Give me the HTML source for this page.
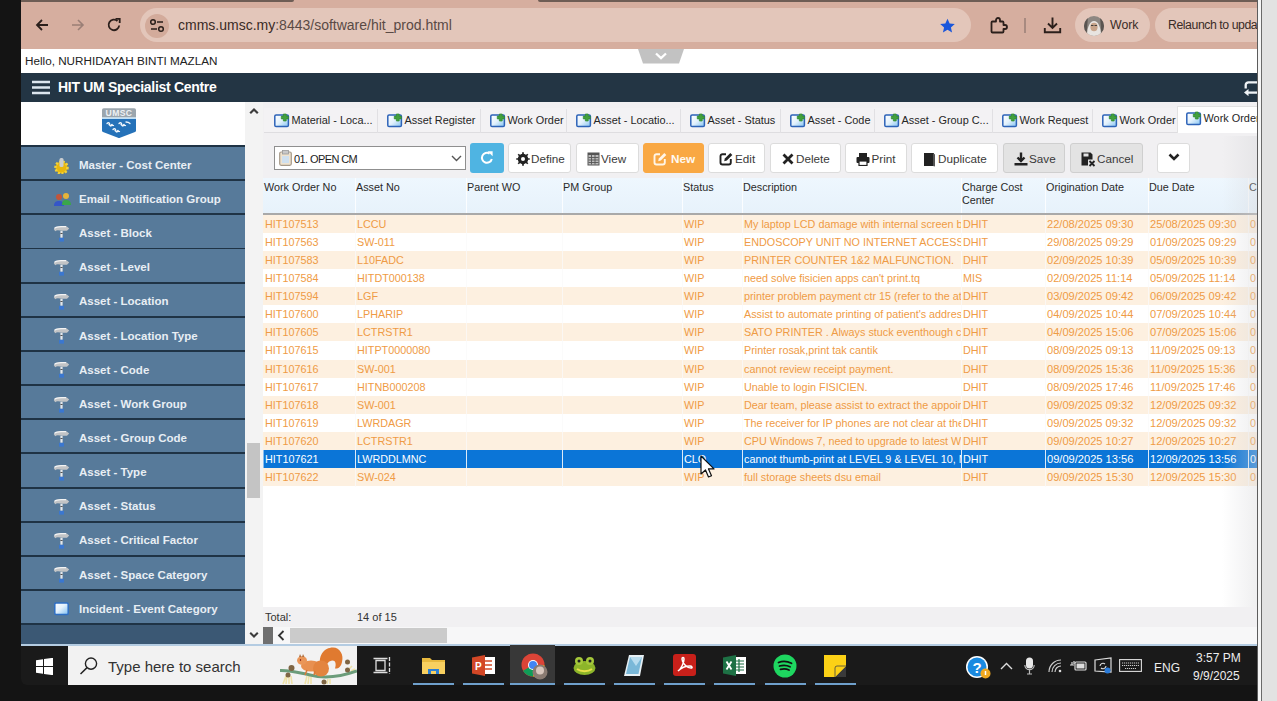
<!DOCTYPE html>
<html><head><meta charset="utf-8"><style>
*{box-sizing:border-box;margin:0;padding:0}
html,body{width:1277px;height:701px;overflow:hidden;background:#141414;font-family:"Liberation Sans",sans-serif}
.a{position:absolute}
#browser{left:21px;top:0;width:1236px;height:49px;background:#d6ae9f}
#ts1{left:21px;top:0;width:273px;height:2px;background:#6e5d55;border-bottom-right-radius:4px}
#ts2{left:538px;top:0;width:719px;height:2px;background:#6e5d55;border-bottom-left-radius:4px}
#pill{left:140px;top:8px;width:831px;height:34px;border-radius:17px;background:#e3c6ba}
#siteic{left:145px;top:13.5px;width:24px;height:24px;border-radius:12px;background:#d3ab9b}
#url{left:178px;top:17px;font-size:14px;color:#3a2a25;white-space:nowrap;letter-spacing:0}
#url span{color:#5a4a45}
#hello{left:21px;top:49px;width:1236px;height:24px;background:#fff}
#hellotxt{left:25px;top:54px;font-size:11.7px;color:#222;white-space:nowrap}
#navy{left:21px;top:73px;width:1236px;height:29px;background:#233544}
#title{left:58px;top:79px;font-size:14px;letter-spacing:-0.3px;font-weight:bold;color:#fff;white-space:nowrap}
#rightstrip{left:1257px;top:0;width:20px;height:701px;background:linear-gradient(to right,#5c5c5c 0,#5c5c5c 1.3px,#f6f6f6 1.3px,#f6f6f6 4px,#6a6a6a 4px,#6a6a6a 5.3px,#e2e2e2 5.3px)}
#rs2{display:none}
#sidebar{left:21px;top:102px;width:224px;height:542px;background:#1f3345;overflow:hidden}
#logoarea{left:0;top:0;width:224px;height:43px;background:#fff}
.item{position:absolute;left:0;width:224px;height:32.3px;background:#577a9a;color:#e8eef4;font-weight:bold;font-size:11.5px;white-space:nowrap}
.item .t{position:absolute;left:58px;top:11.8px}
.item .ic{position:absolute;left:32px;top:9.5px;width:16px;height:16px}
#sbscroll{left:245px;top:102px;width:18px;height:542px;background:#f3f3f3}
#sbthumb{left:247px;top:443px;width:13px;height:55px;background:#c4c4c4}
#content{left:263px;top:102px;width:994px;height:542px;background:#f1f0f2;overflow:hidden}
#taskbar{left:21px;top:645px;width:1236px;height:40px;background:#1a1a1a;border-bottom-left-radius:6px}

.tab{font-size:10.9px;color:#262626;white-space:nowrap;height:16px;line-height:16px}
.tab svg{position:absolute;left:0;top:0}
.tab .tt{position:absolute;left:18.5px;top:0}
.hd{font-size:10.8px;color:#2a2a2a;line-height:13px;white-space:nowrap}
.rw{overflow:hidden}
.cell{position:absolute;top:0;height:100%;line-height:18px;font-size:10.8px;color:#ef9b45;white-space:nowrap;overflow:hidden;padding-left:2px}
.sel .cell{color:#fff;box-shadow:inset 1px 0 0 #86bdf0}
.dt{font-size:11.1px}
.tot{font-size:11px;color:#333;white-space:nowrap}
.btn{position:absolute;top:143px;height:30px;border:1px solid #dcdcdc;border-radius:3px;background:#fff;font-size:11.7px;color:#333;white-space:nowrap;line-height:27px}
.btn svg{position:absolute;top:7.5px}
.btn .bt{position:absolute;top:0.5px;color:#3a3a3a}
</style></head><body>
<div id="browser" class="a"></div><div id="ts1" class="a"></div><div id="ts2" class="a"></div>
<div id="pill" class="a"></div><div id="siteic" class="a"></div>

<svg class="a" style="left:34px;top:17px" width="16" height="16" viewBox="0 0 16 16"><path d="M14 8H3M8 3L3 8l5 5" stroke="#2b1f1b" stroke-width="1.8" fill="none"/></svg>
<svg class="a" style="left:70px;top:17px" width="16" height="16" viewBox="0 0 16 16"><path d="M2 8h11M8 3l5 5-5 5" stroke="#9a7f76" stroke-width="1.6" fill="none"/></svg>
<svg class="a" style="left:106px;top:17px" width="16" height="16" viewBox="0 0 16 16"><path d="M13.2 8.5A5.3 5.3 0 1 1 11.5 4" stroke="#2b1f1b" stroke-width="1.8" fill="none"/><path d="M9.5 1.8h4.2V6" stroke="#2b1f1b" stroke-width="1.8" fill="none"/></svg>
<svg class="a" style="left:149px;top:18px" width="16" height="15" viewBox="0 0 16 15"><circle cx="4" cy="4" r="2.3" stroke="#2b1f1b" stroke-width="1.5" fill="none"/><path d="M8 4h6M2 11h6" stroke="#2b1f1b" stroke-width="1.6"/><circle cx="12" cy="11" r="2.3" stroke="#2b1f1b" stroke-width="1.5" fill="none"/></svg>
<svg class="a" style="left:939px;top:18px" width="17" height="16" viewBox="0 0 24 23"><path d="M12 1l3.1 7 7.4.6-5.6 4.9 1.7 7.3L12 16.9 5.4 20.8l1.7-7.3L1.5 8.6 8.9 8z" fill="#1a56db"/></svg>
<svg class="a" style="left:989px;top:16px" width="19" height="19" viewBox="0 0 19 19"><path d="M3.5 5.5H7V4a2 2 0 0 1 4 0v1.5h2.5a1 1 0 0 1 1 1V9H16a2 2 0 0 1 0 4h-1.5v2.5a1 1 0 0 1-1 1h-10a1 1 0 0 1-1-1v-9a1 1 0 0 1 1-1z" stroke="#2b1f1b" stroke-width="1.8" fill="none" stroke-linejoin="round"/></svg>
<div class="a" style="left:1024px;top:18px;width:1.5px;height:15px;background:#a88a80"></div>
<svg class="a" style="left:1043px;top:16px" width="19" height="19" viewBox="0 0 19 19"><path d="M9.5 1.5v10M5 7.5l4.5 4.5 4.5-4.5" stroke="#2b1f1b" stroke-width="1.9" fill="none"/><path d="M1.8 12v4.2h15.4V12" stroke="#2b1f1b" stroke-width="1.9" fill="none"/></svg>
<div class="a" style="left:1075px;top:8px;width:75px;height:34px;border-radius:17px;background:#e3c6ba"></div>
<svg class="a" style="left:1084px;top:15.5px" width="20" height="20" viewBox="0 0 20 20"><defs><clipPath id="av"><circle cx="10" cy="10" r="10"/></clipPath></defs><g clip-path="url(#av)"><rect width="20" height="20" fill="#8d8782"/><path d="M3 20c0-9 3-15 7-15s7 6 7 15z" fill="#e8e4e0"/><ellipse cx="10" cy="11" rx="3.6" ry="4.2" fill="#c8a48a"/><path d="M7 9.5h2.5M10.5 9.5H13" stroke="#333" stroke-width="0.9"/><path d="M0 0h4l-1.5 20H0zM16 0h4v20h-2.5z" fill="#5a5450"/></g></svg>
<div class="a" style="left:1110px;top:17.5px;font-size:12.3px;color:#3a2c27;white-space:nowrap">Work</div>
<div class="a" style="left:1155px;top:8px;width:120px;height:34px;border-radius:17px;background:#e3c6ba"></div>
<div class="a" style="left:1168px;top:17.5px;font-size:12.3px;letter-spacing:-0.45px;color:#3a2c27;white-space:nowrap">Relaunch to update</div>

<div id="url" class="a">cmms.umsc.my<span>:8443/software/hit_prod.html</span></div>
<div id="hello" class="a"></div><div id="hellotxt" class="a">Hello, NURHIDAYAH BINTI MAZLAN</div>
<svg class="a" style="left:637.5px;top:49px" width="46" height="15" viewBox="0 0 46 15"><path d="M0 0h46l-5 14.6H5z" fill="#c2c2c2"/><path d="M18 4.5l5 4.6 5-4.6" stroke="#fff" stroke-width="2.3" fill="none"/></svg>
<div id="navy" class="a"></div><svg class="a" style="left:32px;top:80px" width="18" height="15" viewBox="0 0 18 15"><path d="M0 2h18M0 7.5h18M0 13h18" stroke="#dce6ef" stroke-width="2.4"/></svg><div id="title" class="a">HIT UM Specialist Centre</div><svg class="a" style="left:1243px;top:80px" width="14" height="16" viewBox="0 0 14 16"><path d="M14 2.3H5.5A2.8 2.8 0 0 0 2.7 5.1V8.5" stroke="#f0f3f6" stroke-width="2.3" fill="none"/><path d="M14 12.6H5" stroke="#f0f3f6" stroke-width="2.3"/><path d="M1 12.6L5.5 9v7.2z" fill="#f0f3f6"/></svg>
<div id="sidebar" class="a"><div id="logoarea" class="a"><svg class="a" style="left:81px;top:6px" width="34" height="31" viewBox="0 0 34 31"><path d="M0 2a1.8 1.8 0 0 1 1.8-1.8h30.4A1.8 1.8 0 0 1 34 2v7.6H0z" fill="#9ba6ae"/><text x="17" y="8.3" font-size="8.6" font-family="Liberation Sans" font-weight="bold" fill="#eef1f4" text-anchor="middle" letter-spacing="0.4">UMSC</text><rect x="0" y="9.6" width="34" height="1.4" fill="#bfe0f7"/><path d="M0 11h34v11.5q0 1-1 1.5L18 29.8q-1 .5-2 0L1 24q-1-.5-1-1.5z" fill="#2572b9"/><path d="M5 15.5c1.5-1.5 3-.5 2.5.8-.5 1.3 1 1.5 2.5.2M7 16.5l1.5 1.5c1-.5 2-1 3-.5M17 15.5c1.5-1.5 3-.5 2.5.8-.5 1.3 1 1.5 2.5.2M19 16.5l1.5 1.5c1-.5 2-1 3-.5M11 21.5c1.5-1.5 3-.5 2.5.8-.5 1.3 1 1.5 2.5.2M13 22.5l1.5 1.5c1-.5 2-1 3-.5M24 14c2 0 3 .5 4 1.5" stroke="#f2f7fc" stroke-width="1.3" fill="none" stroke-linecap="round"/></svg></div>
<div class="item" style="top:45.00px"><div class="ic"><svg width="17" height="17" viewBox="0 0 17 17"><circle cx="8.5" cy="10.5" r="6" fill="#e8b70e"/><circle cx="8.5" cy="10.5" r="6" fill="none" stroke="#f3d23a" stroke-width="2.5" stroke-dasharray="2 1.6"/><rect x="6.5" y="1" width="4" height="9" rx="1.5" fill="#c9cdd0"/></svg></div><div class="t">Master - Cost Center</div></div>
<div class="item" style="top:79.15px"><div class="ic"><svg width="19" height="16" viewBox="0 0 19 16"><circle cx="6" cy="6" r="3" fill="#c2553a"/><path d="M1 15c0-4 2-5 5-5s5 1 5 5z" fill="#3556c8"/><circle cx="13" cy="5" r="3" fill="#e6b43a"/><path d="M9 14c0-4 1.5-5 4-5s5 1 5 5z" fill="#3aa64a"/></svg></div><div class="t">Email - Notification Group</div></div>
<div class="item" style="top:113.30px"><div class="ic"><svg width="17" height="17" viewBox="0 0 17 17"><path d="M0.8 4.2C1.5 2 4.5 1.2 8 1.2H13.5L16.2 3.6 14 5.8H9.5C7 5.8 4 4.6 2.2 6.2z" fill="#c2c4c6"/><path d="M1.5 3.4C3 1.8 5.5 1.6 8 1.6H13" stroke="#f4f4f4" stroke-width="1.1" fill="none"/><rect x="7.4" y="5.8" width="2.2" height="7" fill="#e6e8ea"/><rect x="7.4" y="8" width="2.2" height="1" fill="#555"/><rect x="6" y="12.8" width="5" height="3.8" fill="#3b77cf"/></svg></div><div class="t">Asset - Block</div></div>
<div class="item" style="top:147.45px"><div class="ic"><svg width="17" height="17" viewBox="0 0 17 17"><path d="M0.8 4.2C1.5 2 4.5 1.2 8 1.2H13.5L16.2 3.6 14 5.8H9.5C7 5.8 4 4.6 2.2 6.2z" fill="#c2c4c6"/><path d="M1.5 3.4C3 1.8 5.5 1.6 8 1.6H13" stroke="#f4f4f4" stroke-width="1.1" fill="none"/><rect x="7.4" y="5.8" width="2.2" height="7" fill="#e6e8ea"/><rect x="7.4" y="8" width="2.2" height="1" fill="#555"/><rect x="6" y="12.8" width="5" height="3.8" fill="#3b77cf"/></svg></div><div class="t">Asset - Level</div></div>
<div class="item" style="top:181.60px"><div class="ic"><svg width="17" height="17" viewBox="0 0 17 17"><path d="M0.8 4.2C1.5 2 4.5 1.2 8 1.2H13.5L16.2 3.6 14 5.8H9.5C7 5.8 4 4.6 2.2 6.2z" fill="#c2c4c6"/><path d="M1.5 3.4C3 1.8 5.5 1.6 8 1.6H13" stroke="#f4f4f4" stroke-width="1.1" fill="none"/><rect x="7.4" y="5.8" width="2.2" height="7" fill="#e6e8ea"/><rect x="7.4" y="8" width="2.2" height="1" fill="#555"/><rect x="6" y="12.8" width="5" height="3.8" fill="#3b77cf"/></svg></div><div class="t">Asset - Location</div></div>
<div class="item" style="top:215.75px"><div class="ic"><svg width="17" height="17" viewBox="0 0 17 17"><path d="M0.8 4.2C1.5 2 4.5 1.2 8 1.2H13.5L16.2 3.6 14 5.8H9.5C7 5.8 4 4.6 2.2 6.2z" fill="#c2c4c6"/><path d="M1.5 3.4C3 1.8 5.5 1.6 8 1.6H13" stroke="#f4f4f4" stroke-width="1.1" fill="none"/><rect x="7.4" y="5.8" width="2.2" height="7" fill="#e6e8ea"/><rect x="7.4" y="8" width="2.2" height="1" fill="#555"/><rect x="6" y="12.8" width="5" height="3.8" fill="#3b77cf"/></svg></div><div class="t">Asset - Location Type</div></div>
<div class="item" style="top:249.90px"><div class="ic"><svg width="17" height="17" viewBox="0 0 17 17"><path d="M0.8 4.2C1.5 2 4.5 1.2 8 1.2H13.5L16.2 3.6 14 5.8H9.5C7 5.8 4 4.6 2.2 6.2z" fill="#c2c4c6"/><path d="M1.5 3.4C3 1.8 5.5 1.6 8 1.6H13" stroke="#f4f4f4" stroke-width="1.1" fill="none"/><rect x="7.4" y="5.8" width="2.2" height="7" fill="#e6e8ea"/><rect x="7.4" y="8" width="2.2" height="1" fill="#555"/><rect x="6" y="12.8" width="5" height="3.8" fill="#3b77cf"/></svg></div><div class="t">Asset - Code</div></div>
<div class="item" style="top:284.05px"><div class="ic"><svg width="17" height="17" viewBox="0 0 17 17"><path d="M0.8 4.2C1.5 2 4.5 1.2 8 1.2H13.5L16.2 3.6 14 5.8H9.5C7 5.8 4 4.6 2.2 6.2z" fill="#c2c4c6"/><path d="M1.5 3.4C3 1.8 5.5 1.6 8 1.6H13" stroke="#f4f4f4" stroke-width="1.1" fill="none"/><rect x="7.4" y="5.8" width="2.2" height="7" fill="#e6e8ea"/><rect x="7.4" y="8" width="2.2" height="1" fill="#555"/><rect x="6" y="12.8" width="5" height="3.8" fill="#3b77cf"/></svg></div><div class="t">Asset - Work Group</div></div>
<div class="item" style="top:318.20px"><div class="ic"><svg width="17" height="17" viewBox="0 0 17 17"><path d="M0.8 4.2C1.5 2 4.5 1.2 8 1.2H13.5L16.2 3.6 14 5.8H9.5C7 5.8 4 4.6 2.2 6.2z" fill="#c2c4c6"/><path d="M1.5 3.4C3 1.8 5.5 1.6 8 1.6H13" stroke="#f4f4f4" stroke-width="1.1" fill="none"/><rect x="7.4" y="5.8" width="2.2" height="7" fill="#e6e8ea"/><rect x="7.4" y="8" width="2.2" height="1" fill="#555"/><rect x="6" y="12.8" width="5" height="3.8" fill="#3b77cf"/></svg></div><div class="t">Asset - Group Code</div></div>
<div class="item" style="top:352.35px"><div class="ic"><svg width="17" height="17" viewBox="0 0 17 17"><path d="M0.8 4.2C1.5 2 4.5 1.2 8 1.2H13.5L16.2 3.6 14 5.8H9.5C7 5.8 4 4.6 2.2 6.2z" fill="#c2c4c6"/><path d="M1.5 3.4C3 1.8 5.5 1.6 8 1.6H13" stroke="#f4f4f4" stroke-width="1.1" fill="none"/><rect x="7.4" y="5.8" width="2.2" height="7" fill="#e6e8ea"/><rect x="7.4" y="8" width="2.2" height="1" fill="#555"/><rect x="6" y="12.8" width="5" height="3.8" fill="#3b77cf"/></svg></div><div class="t">Asset - Type</div></div>
<div class="item" style="top:386.50px"><div class="ic"><svg width="17" height="17" viewBox="0 0 17 17"><path d="M0.8 4.2C1.5 2 4.5 1.2 8 1.2H13.5L16.2 3.6 14 5.8H9.5C7 5.8 4 4.6 2.2 6.2z" fill="#c2c4c6"/><path d="M1.5 3.4C3 1.8 5.5 1.6 8 1.6H13" stroke="#f4f4f4" stroke-width="1.1" fill="none"/><rect x="7.4" y="5.8" width="2.2" height="7" fill="#e6e8ea"/><rect x="7.4" y="8" width="2.2" height="1" fill="#555"/><rect x="6" y="12.8" width="5" height="3.8" fill="#3b77cf"/></svg></div><div class="t">Asset - Status</div></div>
<div class="item" style="top:420.65px"><div class="ic"><svg width="17" height="17" viewBox="0 0 17 17"><path d="M0.8 4.2C1.5 2 4.5 1.2 8 1.2H13.5L16.2 3.6 14 5.8H9.5C7 5.8 4 4.6 2.2 6.2z" fill="#c2c4c6"/><path d="M1.5 3.4C3 1.8 5.5 1.6 8 1.6H13" stroke="#f4f4f4" stroke-width="1.1" fill="none"/><rect x="7.4" y="5.8" width="2.2" height="7" fill="#e6e8ea"/><rect x="7.4" y="8" width="2.2" height="1" fill="#555"/><rect x="6" y="12.8" width="5" height="3.8" fill="#3b77cf"/></svg></div><div class="t">Asset - Critical Factor</div></div>
<div class="item" style="top:454.80px"><div class="ic"><svg width="17" height="17" viewBox="0 0 17 17"><path d="M0.8 4.2C1.5 2 4.5 1.2 8 1.2H13.5L16.2 3.6 14 5.8H9.5C7 5.8 4 4.6 2.2 6.2z" fill="#c2c4c6"/><path d="M1.5 3.4C3 1.8 5.5 1.6 8 1.6H13" stroke="#f4f4f4" stroke-width="1.1" fill="none"/><rect x="7.4" y="5.8" width="2.2" height="7" fill="#e6e8ea"/><rect x="7.4" y="8" width="2.2" height="1" fill="#555"/><rect x="6" y="12.8" width="5" height="3.8" fill="#3b77cf"/></svg></div><div class="t">Asset - Space Category</div></div>
<div class="item" style="top:488.95px"><div class="ic"><svg width="17" height="17" viewBox="0 0 17 17"><defs><linearGradient id="sq" x1="0" y1="0" x2="1" y2="1"><stop offset="0" stop-color="#ffffff"/><stop offset="0.45" stop-color="#e6f2fc"/><stop offset="1" stop-color="#7fbff2"/></linearGradient></defs><rect x="1.8" y="3" width="13.4" height="11.4" rx="1.2" fill="url(#sq)" stroke="#2f6fc4" stroke-width="1.5"/></svg></div><div class="t">Incident - Event Category</div></div>
<div class="item" style="top:523.10px;background:#3b5874"></div>
</div>
<div id="sbscroll" class="a"></div><div id="sbthumb" class="a"></div>
<svg class="a" style="left:249px;top:107px" width="10" height="8" viewBox="0 0 10 8"><path d="M1.2 6.3L5 2.5l3.8 3.8" stroke="#3c3c3c" stroke-width="2.2" fill="none"/></svg>
<svg class="a" style="left:249px;top:631px" width="10" height="8" viewBox="0 0 10 8"><path d="M1.2 1.7L5 5.5l3.8-3.8" stroke="#3c3c3c" stroke-width="2" fill="none"/></svg>
<div id="content" class="a"></div>
<div class="a" style="left:264px;top:108px;width:993px;height:25px;background:#f3f2f4;border-bottom:1px solid #dedde0"></div>
<div class="a tab" style="left:273px;top:112px;width:104px"><svg width="17" height="16" viewBox="0 0 17 16"><defs><linearGradient id="tg" x1="0" y1="0" x2="1" y2="1"><stop offset="0" stop-color="#ffffff"/><stop offset="0.5" stop-color="#e2f1fc"/><stop offset="1" stop-color="#86c4f2"/></linearGradient></defs><rect x="1.8" y="2.9" width="13.6" height="11.6" rx="1.3" fill="url(#tg)" stroke="#2d63b8" stroke-width="1.5"/><path d="M10.4 2h2.8v2.1h2.1v2.8h-2.1V9h-2.8V6.9H8.3V4.1h2.1z" fill="#43a03e" stroke="#2f8a30" stroke-width="0.7" stroke-linejoin="round"/></svg><span class="tt">Material - Loca...</span></div>
<div class="a" style="left:377px;top:109px;width:1px;height:24px;background:#e1e0e3"></div>
<div class="a tab" style="left:386px;top:112px;width:94px"><svg width="17" height="16" viewBox="0 0 17 16"><defs><linearGradient id="tg" x1="0" y1="0" x2="1" y2="1"><stop offset="0" stop-color="#ffffff"/><stop offset="0.5" stop-color="#e2f1fc"/><stop offset="1" stop-color="#86c4f2"/></linearGradient></defs><rect x="1.8" y="2.9" width="13.6" height="11.6" rx="1.3" fill="url(#tg)" stroke="#2d63b8" stroke-width="1.5"/><path d="M10.4 2h2.8v2.1h2.1v2.8h-2.1V9h-2.8V6.9H8.3V4.1h2.1z" fill="#43a03e" stroke="#2f8a30" stroke-width="0.7" stroke-linejoin="round"/></svg><span class="tt">Asset Register</span></div>
<div class="a" style="left:480px;top:109px;width:1px;height:24px;background:#e1e0e3"></div>
<div class="a tab" style="left:489px;top:112px;width:77px"><svg width="17" height="16" viewBox="0 0 17 16"><defs><linearGradient id="tg" x1="0" y1="0" x2="1" y2="1"><stop offset="0" stop-color="#ffffff"/><stop offset="0.5" stop-color="#e2f1fc"/><stop offset="1" stop-color="#86c4f2"/></linearGradient></defs><rect x="1.8" y="2.9" width="13.6" height="11.6" rx="1.3" fill="url(#tg)" stroke="#2d63b8" stroke-width="1.5"/><path d="M10.4 2h2.8v2.1h2.1v2.8h-2.1V9h-2.8V6.9H8.3V4.1h2.1z" fill="#43a03e" stroke="#2f8a30" stroke-width="0.7" stroke-linejoin="round"/></svg><span class="tt">Work Order</span></div>
<div class="a" style="left:566px;top:109px;width:1px;height:24px;background:#e1e0e3"></div>
<div class="a tab" style="left:575px;top:112px;width:105px"><svg width="17" height="16" viewBox="0 0 17 16"><defs><linearGradient id="tg" x1="0" y1="0" x2="1" y2="1"><stop offset="0" stop-color="#ffffff"/><stop offset="0.5" stop-color="#e2f1fc"/><stop offset="1" stop-color="#86c4f2"/></linearGradient></defs><rect x="1.8" y="2.9" width="13.6" height="11.6" rx="1.3" fill="url(#tg)" stroke="#2d63b8" stroke-width="1.5"/><path d="M10.4 2h2.8v2.1h2.1v2.8h-2.1V9h-2.8V6.9H8.3V4.1h2.1z" fill="#43a03e" stroke="#2f8a30" stroke-width="0.7" stroke-linejoin="round"/></svg><span class="tt">Asset - Locatio...</span></div>
<div class="a" style="left:680px;top:109px;width:1px;height:24px;background:#e1e0e3"></div>
<div class="a tab" style="left:689px;top:112px;width:91px"><svg width="17" height="16" viewBox="0 0 17 16"><defs><linearGradient id="tg" x1="0" y1="0" x2="1" y2="1"><stop offset="0" stop-color="#ffffff"/><stop offset="0.5" stop-color="#e2f1fc"/><stop offset="1" stop-color="#86c4f2"/></linearGradient></defs><rect x="1.8" y="2.9" width="13.6" height="11.6" rx="1.3" fill="url(#tg)" stroke="#2d63b8" stroke-width="1.5"/><path d="M10.4 2h2.8v2.1h2.1v2.8h-2.1V9h-2.8V6.9H8.3V4.1h2.1z" fill="#43a03e" stroke="#2f8a30" stroke-width="0.7" stroke-linejoin="round"/></svg><span class="tt">Asset - Status</span></div>
<div class="a" style="left:780px;top:109px;width:1px;height:24px;background:#e1e0e3"></div>
<div class="a tab" style="left:789px;top:112px;width:85px"><svg width="17" height="16" viewBox="0 0 17 16"><defs><linearGradient id="tg" x1="0" y1="0" x2="1" y2="1"><stop offset="0" stop-color="#ffffff"/><stop offset="0.5" stop-color="#e2f1fc"/><stop offset="1" stop-color="#86c4f2"/></linearGradient></defs><rect x="1.8" y="2.9" width="13.6" height="11.6" rx="1.3" fill="url(#tg)" stroke="#2d63b8" stroke-width="1.5"/><path d="M10.4 2h2.8v2.1h2.1v2.8h-2.1V9h-2.8V6.9H8.3V4.1h2.1z" fill="#43a03e" stroke="#2f8a30" stroke-width="0.7" stroke-linejoin="round"/></svg><span class="tt">Asset - Code</span></div>
<div class="a" style="left:874px;top:109px;width:1px;height:24px;background:#e1e0e3"></div>
<div class="a tab" style="left:883px;top:112px;width:109px"><svg width="17" height="16" viewBox="0 0 17 16"><defs><linearGradient id="tg" x1="0" y1="0" x2="1" y2="1"><stop offset="0" stop-color="#ffffff"/><stop offset="0.5" stop-color="#e2f1fc"/><stop offset="1" stop-color="#86c4f2"/></linearGradient></defs><rect x="1.8" y="2.9" width="13.6" height="11.6" rx="1.3" fill="url(#tg)" stroke="#2d63b8" stroke-width="1.5"/><path d="M10.4 2h2.8v2.1h2.1v2.8h-2.1V9h-2.8V6.9H8.3V4.1h2.1z" fill="#43a03e" stroke="#2f8a30" stroke-width="0.7" stroke-linejoin="round"/></svg><span class="tt">Asset - Group C...</span></div>
<div class="a" style="left:992px;top:109px;width:1px;height:24px;background:#e1e0e3"></div>
<div class="a tab" style="left:1001px;top:112px;width:91px"><svg width="17" height="16" viewBox="0 0 17 16"><defs><linearGradient id="tg" x1="0" y1="0" x2="1" y2="1"><stop offset="0" stop-color="#ffffff"/><stop offset="0.5" stop-color="#e2f1fc"/><stop offset="1" stop-color="#86c4f2"/></linearGradient></defs><rect x="1.8" y="2.9" width="13.6" height="11.6" rx="1.3" fill="url(#tg)" stroke="#2d63b8" stroke-width="1.5"/><path d="M10.4 2h2.8v2.1h2.1v2.8h-2.1V9h-2.8V6.9H8.3V4.1h2.1z" fill="#43a03e" stroke="#2f8a30" stroke-width="0.7" stroke-linejoin="round"/></svg><span class="tt">Work Request</span></div>
<div class="a" style="left:1092px;top:109px;width:1px;height:24px;background:#e1e0e3"></div>
<div class="a tab" style="left:1101px;top:112px;width:76px"><svg width="17" height="16" viewBox="0 0 17 16"><defs><linearGradient id="tg" x1="0" y1="0" x2="1" y2="1"><stop offset="0" stop-color="#ffffff"/><stop offset="0.5" stop-color="#e2f1fc"/><stop offset="1" stop-color="#86c4f2"/></linearGradient></defs><rect x="1.8" y="2.9" width="13.6" height="11.6" rx="1.3" fill="url(#tg)" stroke="#2d63b8" stroke-width="1.5"/><path d="M10.4 2h2.8v2.1h2.1v2.8h-2.1V9h-2.8V6.9H8.3V4.1h2.1z" fill="#43a03e" stroke="#2f8a30" stroke-width="0.7" stroke-linejoin="round"/></svg><span class="tt">Work Order</span></div>
<div class="a" style="left:1177px;top:106px;width:80px;height:27px;background:#fff;border-left:1px solid #e2e2e2;border-top:1px solid #e2e2e2"></div>
<div class="a tab" style="left:1185px;top:109.5px;width:72px"><svg width="17" height="16" viewBox="0 0 17 16"><defs><linearGradient id="tg" x1="0" y1="0" x2="1" y2="1"><stop offset="0" stop-color="#ffffff"/><stop offset="0.5" stop-color="#e2f1fc"/><stop offset="1" stop-color="#86c4f2"/></linearGradient></defs><rect x="1.8" y="2.9" width="13.6" height="11.6" rx="1.3" fill="url(#tg)" stroke="#2d63b8" stroke-width="1.5"/><path d="M10.4 2h2.8v2.1h2.1v2.8h-2.1V9h-2.8V6.9H8.3V4.1h2.1z" fill="#43a03e" stroke="#2f8a30" stroke-width="0.7" stroke-linejoin="round"/></svg><span class="tt">Work Order</span></div>

<div class="a" style="left:274px;top:146px;width:192px;height:24px;border:1px solid #8f8f8f;background:#fff"></div>
<svg class="a" style="left:279px;top:150px" width="13" height="16" viewBox="0 0 13 16"><rect x="0.7" y="2" width="11.6" height="13.3" rx="1.5" fill="#efe3cf" stroke="#a69a8a" stroke-width="1.2"/><rect x="3.5" y="0.5" width="6" height="3.5" fill="#c8c8c8" stroke="#999" stroke-width="0.8"/><rect x="3" y="6" width="7" height="7" fill="#cfe0ef"/></svg>
<div class="a" style="left:294px;top:152.5px;font-size:11px;letter-spacing:-0.6px;color:#222;white-space:nowrap">01. OPEN CM</div>
<svg class="a" style="left:451px;top:155px" width="11" height="7" viewBox="0 0 11 7"><path d="M1 1l4.5 4.5 4.5-4.5" stroke="#555" stroke-width="1.4" fill="none"/></svg>
<div class="a" style="left:470px;top:143px;width:34px;height:30px;border-radius:3px;background:#4fb4e2"></div>
<svg class="a" style="left:479px;top:150px" width="16" height="16" viewBox="0 0 16 16"><path d="M12.8 9A5 5 0 1 1 10.6 3.6" stroke="#fff" stroke-width="2" fill="none"/><path d="M8.6 1.2h5v5z" fill="#fff"/></svg>
<div class="btn" style="left:508px;width:63px"><svg style="left:7px" width="14" height="14" viewBox="0 0 14 14"><path d="M11.93 6.14 L13.75 6.15 L13.75 7.85 L11.93 7.86 L11.09 9.88 L12.37 11.17 L11.17 12.37 L9.88 11.09 L7.86 11.93 L7.85 13.75 L6.15 13.75 L6.14 11.93 L4.12 11.09 L2.83 12.37 L1.63 11.17 L2.91 9.88 L2.07 7.86 L0.25 7.85 L0.25 6.15 L2.07 6.14 L2.91 4.12 L1.63 2.83 L2.83 1.63 L4.12 2.91 L6.14 2.07 L6.15 0.25 L7.85 0.25 L7.86 2.07 L9.88 2.91 L11.17 1.63 L12.37 2.83 L11.09 4.12Z" fill="#222"/><circle cx="7" cy="7" r="5.1" fill="#222"/><circle cx="7" cy="7" r="2" fill="#fff"/></svg><span class="bt" style="left:22px">Define</span></div>
<div class="btn" style="left:576px;width:63px"><svg style="left:10px" width="13" height="14" viewBox="0 0 13 14"><rect x="0.5" y="0.5" width="12" height="13" fill="#555"/><rect x="1.5" y="3" width="10" height="9.5" fill="#bbb"/><path d="M4.5 3v9.5M8 3v9.5M1.5 5.5h10M1.5 8h10M1.5 10.5h10" stroke="#555" stroke-width="0.9"/></svg><span class="bt" style="left:24px">View</span></div>
<div class="btn" style="left:643px;width:61px;background:#f9a843;border-color:#f9a843;color:#fff;font-weight:bold"><svg style="left:9px" width="14" height="14" viewBox="0 0 14 14"><path d="M7 2.2H3.5a2 2 0 0 0-2 2v6.3a2 2 0 0 0 2 2h6.3a2 2 0 0 0 2-2V7" stroke="#fff5e6" stroke-width="1.9" fill="none"/><path d="M5.2 9.2l.6-2.6L11.3 1.1l2 2L7.8 8.6z" fill="#fff5e6"/></svg><span class="bt" style="left:27px;color:#fffaf2">New</span></div>
<div class="btn" style="left:708px;width:57px"><svg style="left:10px" width="14" height="14" viewBox="0 0 14 14"><path d="M7 2.2H3.5a2 2 0 0 0-2 2v6.3a2 2 0 0 0 2 2h6.3a2 2 0 0 0 2-2V7" stroke="#222" stroke-width="1.9" fill="none"/><path d="M5.2 9.2l.6-2.6L11.3 1.1l2 2L7.8 8.6z" fill="#222"/></svg><span class="bt" style="left:26px">Edit</span></div>
<div class="btn" style="left:770px;width:71px"><svg style="left:11px" width="12" height="14" viewBox="0 0 12 14"><path d="M1.5 2.5l9 9M10.5 2.5l-9 9" stroke="#222" stroke-width="2.8"/></svg><span class="bt" style="left:25px">Delete</span></div>
<div class="btn" style="left:845px;width:62px"><svg style="left:10px" width="14" height="14" viewBox="0 0 14 14"><rect x="3" y="1" width="8" height="4" fill="#222"/><rect x="0.5" y="5" width="13" height="6" rx="1" fill="#222"/><rect x="3" y="9" width="8" height="4.5" fill="#fff" stroke="#222" stroke-width="1.2"/></svg><span class="bt" style="left:25.5px">Print</span></div>
<div class="btn" style="left:911px;width:87px"><svg style="left:10px" width="14" height="15" viewBox="0 0 14 15"><path d="M2 1h10v13H2z" fill="#222"/><path d="M11 1l2 1.5v12l-2-.5" fill="#555"/></svg><span class="bt" style="left:26px">Duplicate</span></div>
<div class="btn" style="left:1003px;width:62px;background:#e3e3e3;border-color:#cfcfcf"><svg style="left:10px" width="14" height="14" viewBox="0 0 14 14"><path d="M7 0.5v8M3.5 5.5L7 9l3.5-3.5" stroke="#222" stroke-width="2.4" fill="none"/><rect x="0.5" y="11" width="13" height="2.5" fill="#222"/></svg><span class="bt" style="left:25px">Save</span></div>
<div class="btn" style="left:1070px;width:73px;background:#e3e3e3;border-color:#cfcfcf"><svg style="left:10px" width="15" height="15" viewBox="0 0 15 15"><path d="M0.5 0.5h9l2 2v5H7v6H0.5z" fill="#222"/><rect x="2.5" y="1.5" width="5" height="3" fill="#e3e3e3"/><path d="M8.5 9l5 5M13.5 9l-5 5" stroke="#222" stroke-width="1.8"/></svg><span class="bt" style="left:26px">Cancel</span></div>
<div class="btn" style="left:1157px;width:33px"><svg style="left:10px;top:9px" width="12" height="9" viewBox="0 0 12 9"><path d="M1.5 1.5L6 6l4.5-4.5" stroke="#222" stroke-width="2.6" fill="none"/></svg></div>

<div class="a" style="left:263px;top:178px;width:994px;height:35px;background:linear-gradient(#eef7fe,#e7f2fb)"></div>
<div class="a" style="left:263px;top:213px;width:994px;height:2px;background:#a9a9a9"></div>
<div class="a" style="left:263px;top:215px;width:994px;height:392px;background:#fff"></div>
<div class="a hd" style="left:264px;top:180.5px">Work Order No</div>
<div class="a" style="left:355px;top:178px;width:1px;height:35px;background:#fbfdff"></div>
<div class="a hd" style="left:356px;top:180.5px">Asset No</div>
<div class="a" style="left:466px;top:178px;width:1px;height:35px;background:#fbfdff"></div>
<div class="a hd" style="left:467px;top:180.5px">Parent WO</div>
<div class="a" style="left:562px;top:178px;width:1px;height:35px;background:#fbfdff"></div>
<div class="a hd" style="left:563px;top:180.5px">PM Group</div>
<div class="a" style="left:682px;top:178px;width:1px;height:35px;background:#fbfdff"></div>
<div class="a hd" style="left:683px;top:180.5px">Status</div>
<div class="a" style="left:742px;top:178px;width:1px;height:35px;background:#fbfdff"></div>
<div class="a hd" style="left:743px;top:180.5px">Description</div>
<div class="a" style="left:961px;top:178px;width:1px;height:35px;background:#fbfdff"></div>
<div class="a hd" style="left:962px;top:180.5px">Charge Cost<br>Center</div>
<div class="a" style="left:1045px;top:178px;width:1px;height:35px;background:#fbfdff"></div>
<div class="a hd" style="left:1046px;top:180.5px">Origination Date</div>
<div class="a" style="left:1148px;top:178px;width:1px;height:35px;background:#fbfdff"></div>
<div class="a hd" style="left:1149px;top:180.5px">Due Date</div>
<div class="a" style="left:1248px;top:178px;width:1px;height:35px;background:#fbfdff"></div>
<div class="a hd" style="left:1249px;top:180.5px">C</div>
<div class="a rw" style="left:263px;top:215px;width:994px;height:18px;background:#fdf0e0">
<div class="cell" style="left:0px;width:92px">HIT107513</div>
<div class="cell" style="left:92px;width:111px">LCCU</div>
<div class="cell" style="left:203px;width:96px"></div>
<div class="cell" style="left:299px;width:120px"></div>
<div class="cell" style="left:419px;width:60px">WIP</div>
<div class="cell" style="left:479px;width:219px">My laptop LCD damage with internal screen broken</div>
<div class="cell" style="left:698px;width:84px">DHIT</div>
<div class="cell dt" style="left:782px;width:103px">22/08/2025 09:30</div>
<div class="cell dt" style="left:885px;width:100px">25/08/2025 09:30</div>
<div class="cell" style="left:985px;width:52px">0</div>
</div>
<div class="a rw" style="left:263px;top:233px;width:994px;height:18px;background:#ffffff">
<div class="cell" style="left:0px;width:92px">HIT107563</div>
<div class="cell" style="left:92px;width:111px">SW-011</div>
<div class="cell" style="left:203px;width:96px"></div>
<div class="cell" style="left:299px;width:120px"></div>
<div class="cell" style="left:419px;width:60px">WIP</div>
<div class="cell" style="left:479px;width:219px">ENDOSCOPY UNIT NO INTERNET ACCESS, UF</div>
<div class="cell" style="left:698px;width:84px">DHIT</div>
<div class="cell dt" style="left:782px;width:103px">29/08/2025 09:29</div>
<div class="cell dt" style="left:885px;width:100px">01/09/2025 09:29</div>
<div class="cell" style="left:985px;width:52px">0</div>
</div>
<div class="a rw" style="left:263px;top:251px;width:994px;height:18px;background:#fdf0e0">
<div class="cell" style="left:0px;width:92px">HIT107583</div>
<div class="cell" style="left:92px;width:111px">L10FADC</div>
<div class="cell" style="left:203px;width:96px"></div>
<div class="cell" style="left:299px;width:120px"></div>
<div class="cell" style="left:419px;width:60px">WIP</div>
<div class="cell" style="left:479px;width:219px">PRINTER COUNTER 1&amp;2 MALFUNCTION.</div>
<div class="cell" style="left:698px;width:84px">DHIT</div>
<div class="cell dt" style="left:782px;width:103px">02/09/2025 10:39</div>
<div class="cell dt" style="left:885px;width:100px">05/09/2025 10:39</div>
<div class="cell" style="left:985px;width:52px">0</div>
</div>
<div class="a rw" style="left:263px;top:269px;width:994px;height:18px;background:#ffffff">
<div class="cell" style="left:0px;width:92px">HIT107584</div>
<div class="cell" style="left:92px;width:111px">HITDT000138</div>
<div class="cell" style="left:203px;width:96px"></div>
<div class="cell" style="left:299px;width:120px"></div>
<div class="cell" style="left:419px;width:60px">WIP</div>
<div class="cell" style="left:479px;width:219px">need solve fisicien apps can't print.tq</div>
<div class="cell" style="left:698px;width:84px">MIS</div>
<div class="cell dt" style="left:782px;width:103px">02/09/2025 11:14</div>
<div class="cell dt" style="left:885px;width:100px">05/09/2025 11:14</div>
<div class="cell" style="left:985px;width:52px">0</div>
</div>
<div class="a rw" style="left:263px;top:287px;width:994px;height:18px;background:#fdf0e0">
<div class="cell" style="left:0px;width:92px">HIT107594</div>
<div class="cell" style="left:92px;width:111px">LGF</div>
<div class="cell" style="left:203px;width:96px"></div>
<div class="cell" style="left:299px;width:120px"></div>
<div class="cell" style="left:419px;width:60px">WIP</div>
<div class="cell" style="left:479px;width:219px">printer problem payment ctr  15 (refer to the attached)</div>
<div class="cell" style="left:698px;width:84px">DHIT</div>
<div class="cell dt" style="left:782px;width:103px">03/09/2025 09:42</div>
<div class="cell dt" style="left:885px;width:100px">06/09/2025 09:42</div>
<div class="cell" style="left:985px;width:52px">0</div>
</div>
<div class="a rw" style="left:263px;top:305px;width:994px;height:18px;background:#ffffff">
<div class="cell" style="left:0px;width:92px">HIT107600</div>
<div class="cell" style="left:92px;width:111px">LPHARIP</div>
<div class="cell" style="left:203px;width:96px"></div>
<div class="cell" style="left:299px;width:120px"></div>
<div class="cell" style="left:419px;width:60px">WIP</div>
<div class="cell" style="left:479px;width:219px">Assist to automate printing of patient's address</div>
<div class="cell" style="left:698px;width:84px">DHIT</div>
<div class="cell dt" style="left:782px;width:103px">04/09/2025 10:44</div>
<div class="cell dt" style="left:885px;width:100px">07/09/2025 10:44</div>
<div class="cell" style="left:985px;width:52px">0</div>
</div>
<div class="a rw" style="left:263px;top:323px;width:994px;height:18px;background:#fdf0e0">
<div class="cell" style="left:0px;width:92px">HIT107605</div>
<div class="cell" style="left:92px;width:111px">LCTRSTR1</div>
<div class="cell" style="left:203px;width:96px"></div>
<div class="cell" style="left:299px;width:120px"></div>
<div class="cell" style="left:419px;width:60px">WIP</div>
<div class="cell" style="left:479px;width:219px">SATO PRINTER . Always stuck eventhough cl</div>
<div class="cell" style="left:698px;width:84px">DHIT</div>
<div class="cell dt" style="left:782px;width:103px">04/09/2025 15:06</div>
<div class="cell dt" style="left:885px;width:100px">07/09/2025 15:06</div>
<div class="cell" style="left:985px;width:52px">0</div>
</div>
<div class="a rw" style="left:263px;top:341px;width:994px;height:19px;background:#ffffff">
<div class="cell" style="left:0px;width:92px">HIT107615</div>
<div class="cell" style="left:92px;width:111px">HITPT0000080</div>
<div class="cell" style="left:203px;width:96px"></div>
<div class="cell" style="left:299px;width:120px"></div>
<div class="cell" style="left:419px;width:60px">WIP</div>
<div class="cell" style="left:479px;width:219px">Printer rosak,print tak cantik</div>
<div class="cell" style="left:698px;width:84px">DHIT</div>
<div class="cell dt" style="left:782px;width:103px">08/09/2025 09:13</div>
<div class="cell dt" style="left:885px;width:100px">11/09/2025 09:13</div>
<div class="cell" style="left:985px;width:52px">0</div>
</div>
<div class="a rw" style="left:263px;top:360px;width:994px;height:18px;background:#fdf0e0">
<div class="cell" style="left:0px;width:92px">HIT107616</div>
<div class="cell" style="left:92px;width:111px">SW-001</div>
<div class="cell" style="left:203px;width:96px"></div>
<div class="cell" style="left:299px;width:120px"></div>
<div class="cell" style="left:419px;width:60px">WIP</div>
<div class="cell" style="left:479px;width:219px">cannot review receipt payment.</div>
<div class="cell" style="left:698px;width:84px">DHIT</div>
<div class="cell dt" style="left:782px;width:103px">08/09/2025 15:36</div>
<div class="cell dt" style="left:885px;width:100px">11/09/2025 15:36</div>
<div class="cell" style="left:985px;width:52px">0</div>
</div>
<div class="a rw" style="left:263px;top:378px;width:994px;height:18px;background:#ffffff">
<div class="cell" style="left:0px;width:92px">HIT107617</div>
<div class="cell" style="left:92px;width:111px">HITNB000208</div>
<div class="cell" style="left:203px;width:96px"></div>
<div class="cell" style="left:299px;width:120px"></div>
<div class="cell" style="left:419px;width:60px">WIP</div>
<div class="cell" style="left:479px;width:219px">Unable to login FISICIEN.</div>
<div class="cell" style="left:698px;width:84px">DHIT</div>
<div class="cell dt" style="left:782px;width:103px">08/09/2025 17:46</div>
<div class="cell dt" style="left:885px;width:100px">11/09/2025 17:46</div>
<div class="cell" style="left:985px;width:52px">0</div>
</div>
<div class="a rw" style="left:263px;top:396px;width:994px;height:18px;background:#fdf0e0">
<div class="cell" style="left:0px;width:92px">HIT107618</div>
<div class="cell" style="left:92px;width:111px">SW-001</div>
<div class="cell" style="left:203px;width:96px"></div>
<div class="cell" style="left:299px;width:120px"></div>
<div class="cell" style="left:419px;width:60px">WIP</div>
<div class="cell" style="left:479px;width:219px">Dear team, please assist to extract the appointment</div>
<div class="cell" style="left:698px;width:84px">DHIT</div>
<div class="cell dt" style="left:782px;width:103px">09/09/2025 09:32</div>
<div class="cell dt" style="left:885px;width:100px">12/09/2025 09:32</div>
<div class="cell" style="left:985px;width:52px">0</div>
</div>
<div class="a rw" style="left:263px;top:414px;width:994px;height:18px;background:#ffffff">
<div class="cell" style="left:0px;width:92px">HIT107619</div>
<div class="cell" style="left:92px;width:111px">LWRDAGR</div>
<div class="cell" style="left:203px;width:96px"></div>
<div class="cell" style="left:299px;width:120px"></div>
<div class="cell" style="left:419px;width:60px">WIP</div>
<div class="cell" style="left:479px;width:219px">The receiver for IP phones are not clear at the</div>
<div class="cell" style="left:698px;width:84px">DHIT</div>
<div class="cell dt" style="left:782px;width:103px">09/09/2025 09:32</div>
<div class="cell dt" style="left:885px;width:100px">12/09/2025 09:32</div>
<div class="cell" style="left:985px;width:52px">0</div>
</div>
<div class="a rw" style="left:263px;top:432px;width:994px;height:18px;background:#fdf0e0">
<div class="cell" style="left:0px;width:92px">HIT107620</div>
<div class="cell" style="left:92px;width:111px">LCTRSTR1</div>
<div class="cell" style="left:203px;width:96px"></div>
<div class="cell" style="left:299px;width:120px"></div>
<div class="cell" style="left:419px;width:60px">WIP</div>
<div class="cell" style="left:479px;width:219px">CPU Windows 7, need to upgrade to latest Windows</div>
<div class="cell" style="left:698px;width:84px">DHIT</div>
<div class="cell dt" style="left:782px;width:103px">09/09/2025 10:27</div>
<div class="cell dt" style="left:885px;width:100px">12/09/2025 10:27</div>
<div class="cell" style="left:985px;width:52px">0</div>
</div>
<div class="a rw sel" style="left:263px;top:450px;width:994px;height:18px;background:#0b75d7">
<div class="cell" style="left:0px;width:92px">HIT107621</div>
<div class="cell" style="left:92px;width:111px">LWRDDLMNC</div>
<div class="cell" style="left:203px;width:96px"></div>
<div class="cell" style="left:299px;width:120px"></div>
<div class="cell" style="left:419px;width:60px">CLO</div>
<div class="cell" style="left:479px;width:219px">cannot thumb-print at LEVEL 9 &amp; LEVEL 10, MMC</div>
<div class="cell" style="left:698px;width:84px">DHIT</div>
<div class="cell dt" style="left:782px;width:103px">09/09/2025 13:56</div>
<div class="cell dt" style="left:885px;width:100px">12/09/2025 13:56</div>
<div class="cell" style="left:985px;width:52px">0</div>
</div>
<div class="a rw" style="left:263px;top:468px;width:994px;height:18px;background:#fdf0e0">
<div class="cell" style="left:0px;width:92px">HIT107622</div>
<div class="cell" style="left:92px;width:111px">SW-024</div>
<div class="cell" style="left:203px;width:96px"></div>
<div class="cell" style="left:299px;width:120px"></div>
<div class="cell" style="left:419px;width:60px">WIP</div>
<div class="cell" style="left:479px;width:219px">full storage sheets dsu email</div>
<div class="cell" style="left:698px;width:84px">DHIT</div>
<div class="cell dt" style="left:782px;width:103px">09/09/2025 15:30</div>
<div class="cell dt" style="left:885px;width:100px">12/09/2025 15:30</div>
<div class="cell" style="left:985px;width:52px">0</div>
</div>
<div class="a" style="left:355px;top:215px;width:1px;height:272px;background:rgba(250,250,250,0.75)"></div>
<div class="a" style="left:466px;top:215px;width:1px;height:272px;background:rgba(250,250,250,0.75)"></div>
<div class="a" style="left:562px;top:215px;width:1px;height:272px;background:rgba(250,250,250,0.75)"></div>
<div class="a" style="left:682px;top:215px;width:1px;height:272px;background:rgba(250,250,250,0.75)"></div>
<div class="a" style="left:742px;top:215px;width:1px;height:272px;background:rgba(250,250,250,0.75)"></div>
<div class="a" style="left:961px;top:215px;width:1px;height:272px;background:rgba(250,250,250,0.75)"></div>
<div class="a" style="left:1045px;top:215px;width:1px;height:272px;background:rgba(250,250,250,0.75)"></div>
<div class="a" style="left:1148px;top:215px;width:1px;height:272px;background:rgba(250,250,250,0.75)"></div>
<div class="a" style="left:1248px;top:215px;width:1px;height:272px;background:rgba(250,250,250,0.75)"></div>
<div class="a" style="left:1222px;top:136px;width:35px;height:471px;background:linear-gradient(to right,rgba(220,220,222,0),rgba(215,215,218,0.4))"></div>
<div class="a" style="left:263px;top:607px;width:994px;height:20px;background:#f1f0f2"></div>
<div class="a tot" style="left:265px;top:610.5px">Total:</div><div class="a tot" style="left:357px;top:610.5px">14 of 15</div>
<div class="a" style="left:263px;top:627px;width:994px;height:17px;background:#f7f7f8"></div>
<div class="a" style="left:263px;top:627px;width:10px;height:17px;background:#6f6f6f"></div>
<svg class="a" style="left:277px;top:630px" width="8" height="11" viewBox="0 0 8 11"><path d="M6.5 1L2 5.5 6.5 10" stroke="#333" stroke-width="1.8" fill="none"/></svg>
<div class="a" style="left:290px;top:628px;width:157px;height:15px;background:#cbcbcb"></div>
<svg class="a" style="left:700px;top:455px" width="15" height="24" viewBox="0 0 15 24"><path d="M1 1v18l4.5-4 3 7 3-1.3-3-6.8H14z" fill="#fff" stroke="#111" stroke-width="1.2" stroke-linejoin="round"/></svg>
<div id="taskbar" class="a"></div>

<div class="a" style="left:21px;top:644px;width:1236px;height:1.7px;background:#b4cce2"></div>
<svg class="a" style="left:36px;top:658px" width="17" height="17" viewBox="0 0 17 17"><path d="M0 2.2l7-1v6.8H0zM8 1l9-1.2V8H8zM0 9h7v6.8l-7-1zM8 9h9v8.2l-9-1.2z" fill="#fff"/></svg>
<div class="a" style="left:68px;top:645.7px;width:289px;height:39px;background:#f2f2f2"></div>
<svg class="a" style="left:79px;top:656px" width="20" height="20" viewBox="0 0 20 20"><circle cx="12" cy="7.6" r="5.6" stroke="#222" stroke-width="1.4" fill="none"/><path d="M8 11.6L1.5 18" stroke="#222" stroke-width="1.5"/></svg>
<div class="a" style="left:108px;top:658px;font-size:15px;color:#333;white-space:nowrap">Type here to search</div>
<svg class="a" style="left:280px;top:645.5px" width="77" height="39" viewBox="0 0 77 39">
 <path d="M3 38l3-8M6 38l1-9M9 38l0-9M12 38l-1-8M25 38l2-8M28 38l1-8M31 38l0-7M47 38l1-5M50 38l0-5M69 23l3-3M71 25l4-2" stroke="#efe2a8" stroke-width="1.6"/>
 <path d="M0 24.5C10 24 20 27 30 29C45 33 60 31 77 25" stroke="#6b9c7a" stroke-width="3" fill="none"/>
 <path d="M41 22C37 10 44 1.5 53 1.5C60 1.5 64 9 62 16C61 21 58 23 55 22.5C56.5 18 55.5 14.5 52.5 14.5C49 14.5 46 18 46 23Z" fill="#e07a30"/>
 <ellipse cx="31" cy="20" rx="10" ry="5.5" fill="#e89050"/>
 <circle cx="41" cy="22.5" r="8" fill="#e3843f"/>
 <ellipse cx="22" cy="14.5" rx="5" ry="4.2" fill="#ea9658"/>
 <path d="M19 11l1-3 1.5 3M22 11l1-3 1.5 3" fill="#b07040"/>
 <circle cx="20.5" cy="14" r="0.7" fill="#600"/>
 <path d="M27 24l-2 5M35 25l-1 4" stroke="#d87a3a" stroke-width="1.5"/>
 <circle cx="11.5" cy="22" r="3" fill="#7e6544"/><circle cx="8" cy="29" r="2.5" fill="#7e6544"/><circle cx="67.5" cy="16" r="2.5" fill="#7e6544"/><circle cx="67.5" cy="24" r="2.5" fill="#7e6544"/><circle cx="44" cy="36" r="2.5" fill="#7e6544"/>
</svg>
<svg class="a" style="left:373px;top:657px" width="18" height="17" viewBox="0 0 18 17"><path d="M3 3.5h9v10H3zM0.5 1.5h14M0.5 15.5h14" stroke="#ddd" stroke-width="1.3" fill="none"/><path d="M16.5 0v17" stroke="#ddd" stroke-width="1.3" stroke-dasharray="4 1.5"/></svg>
<svg class="a" style="left:422px;top:656px" width="23" height="19" viewBox="0 0 23 19"><path d="M0 2h8l2 2h13v14H0z" fill="#e8b93e"/><path d="M0 6h23v12H0z" fill="#f8d060"/><path d="M6 13h11v5H6z" fill="#2c7fd4"/><path d="M9 15h5v3H9z" fill="#f8d060"/></svg>
<svg class="a" style="left:472px;top:655px" width="23" height="21" viewBox="0 0 23 21"><rect x="9" y="2" width="14" height="17" fill="#fff"/><path d="M12 6h8M12 10h8M12 14h8" stroke="#d24a26" stroke-width="1.4"/><path d="M0 2.5L13 0v21L0 18.5z" fill="#d24726"/><text x="3" y="14.5" font-size="10" font-weight="bold" font-family="Liberation Sans" fill="#fff">P</text></svg>
<div class="a" style="left:510px;top:645px;width:45px;height:39px;background:#383838"></div>
<svg class="a" style="left:521px;top:653px" width="27" height="27" viewBox="0 0 27 27"><circle cx="12" cy="12" r="11.5" fill="#db4437"/><path d="M12 12L2 17.8A11.5 11.5 0 0 0 17.5 22z" fill="#0f9d58"/><path d="M12 12h11.5A11.5 11.5 0 0 1 12 23.5z" fill="#f4b400"/><circle cx="12" cy="12" r="5" fill="#fff"/><circle cx="12" cy="12" r="4" fill="#4285f4"/><circle cx="19" cy="19" r="7.5" fill="#8a7b72"/><circle cx="19" cy="17.5" r="4" fill="#d8c7bd"/></svg>
<svg class="a" style="left:572px;top:656px" width="25" height="20" viewBox="0 0 25 20"><ellipse cx="12.5" cy="12" rx="11" ry="7" fill="#8db52a"/><circle cx="7" cy="5" r="4" fill="#a5c83a"/><circle cx="18" cy="5" r="4" fill="#a5c83a"/><path d="M5 13c4 3 11 3 15 0" stroke="#e8e04a" stroke-width="2" fill="none"/><circle cx="7" cy="5" r="1.5" fill="#222"/><circle cx="18" cy="5" r="1.5" fill="#222"/></svg>
<svg class="a" style="left:622px;top:654px" width="24" height="23" viewBox="0 0 24 23"><path d="M7 1h15l-4 21H2z" fill="#e8f0f4"/><path d="M8 3h12l-3.5 17H4z" fill="#7ab8d8"/><path d="M8 3h12l-6 9z" fill="#b8dcee"/></svg>
<svg class="a" style="left:673px;top:654px" width="23" height="22" viewBox="0 0 23 22"><rect x="0" y="0" width="23" height="22" rx="3" fill="#c8201a"/><path d="M5 17c3-2 6-8 6-12 0-2-2-2-2 0 0 4 5 9 9 9 2 0 1-2-1-2-4 0-9 2-12 5z" stroke="#fff" stroke-width="1.5" fill="none"/></svg>
<svg class="a" style="left:723px;top:655px" width="23" height="21" viewBox="0 0 23 21"><rect x="9" y="2" width="14" height="17" fill="#fff"/><path d="M13 6h8M13 9h8M13 12h8M13 15h8M16 4v13" stroke="#1e7145" stroke-width="1.2"/><path d="M0 2.5L13 0v21L0 18.5z" fill="#1e7145"/><path d="M3.5 6.5l5 8M8.5 6.5l-5 8" stroke="#fff" stroke-width="1.8"/></svg>
<svg class="a" style="left:773px;top:654px" width="24" height="24" viewBox="0 0 24 24"><circle cx="12" cy="12" r="11.5" fill="#1ed760"/><path d="M5.5 8.5c4-1.5 9-1.2 13 .8M6.5 12c3.5-1 7.5-.8 10.5.8M7.5 15.3c3-.8 6-.6 8.5.7" stroke="#111" stroke-width="1.8" stroke-linecap="round" fill="none"/></svg>
<svg class="a" style="left:824px;top:655px" width="22" height="22" viewBox="0 0 22 22"><path d="M0 0h22v22H0z" fill="#fcd116"/><path d="M11 22L22 11v11z" fill="#3a3a3a"/><path d="M11 22L22 11H13a2 2 0 0 0-2 2z" fill="#fcd116"/><path d="M11 22V13a2 2 0 0 1 2-2h9" stroke="#444" stroke-width="0.8" fill="none"/></svg>
<div class="a" style="left:413px;top:683px;width:41px;height:2px;background:#6fa0cc"></div>
<div class="a" style="left:463px;top:683px;width:41px;height:2px;background:#6fa0cc"></div>
<div class="a" style="left:510px;top:683px;width:45px;height:2px;background:#6fa0cc"></div>
<div class="a" style="left:564px;top:683px;width:41px;height:2px;background:#6fa0cc"></div>
<div class="a" style="left:614px;top:683px;width:41px;height:2px;background:#6fa0cc"></div>
<div class="a" style="left:664px;top:683px;width:41px;height:2px;background:#6fa0cc"></div>
<div class="a" style="left:714px;top:683px;width:41px;height:2px;background:#6fa0cc"></div>
<div class="a" style="left:765px;top:683px;width:41px;height:2px;background:#6fa0cc"></div>
<div class="a" style="left:815px;top:683px;width:41px;height:2px;background:#6fa0cc"></div>
<svg class="a" style="left:965px;top:655px" width="27" height="25" viewBox="0 0 27 25"><circle cx="12" cy="12" r="11" fill="#fff"/><circle cx="12" cy="12" r="9.5" fill="#1a8ae0"/><text x="12" y="17.5" font-size="15" font-weight="bold" font-family="Liberation Sans" fill="#fff" text-anchor="middle">?</text><circle cx="20.5" cy="18.5" r="5" fill="#f0a820"/><path d="M20.5 16v4" stroke="#fff" stroke-width="1.5"/></svg>
<svg class="a" style="left:1000px;top:662px" width="13" height="8" viewBox="0 0 13 8"><path d="M1 7l5.5-5.5L12 7" stroke="#ddd" stroke-width="1.4" fill="none"/></svg>
<svg class="a" style="left:1024px;top:657px" width="11" height="18" viewBox="0 0 11 18"><rect x="2" y="0.5" width="7" height="11" rx="3.5" fill="#e8e8e8"/><path d="M0.8 8a4.7 4.7 0 0 0 9.4 0M5.5 13v4M3 17h5" stroke="#bbb" stroke-width="1.2" fill="none"/></svg>
<svg class="a" style="left:1048px;top:659px" width="14" height="14" viewBox="0 0 14 14"><path d="M1 13A12 12 0 0 1 13 1M4 13a9 9 0 0 1 9-9M7 13a6 6 0 0 1 6-6" stroke="#ccc" stroke-width="1.2" fill="none"/><circle cx="12" cy="12" r="1.3" fill="#ddd"/></svg>
<svg class="a" style="left:1070px;top:659px" width="18" height="13" viewBox="0 0 18 13"><rect x="5" y="3" width="11" height="8" rx="1" stroke="#ddd" stroke-width="1.2" fill="none"/><rect x="6.5" y="4.5" width="8" height="5" fill="#ddd"/><path d="M0 6h4M2 3v3M4 2v3" stroke="#ddd" stroke-width="1.2"/></svg>
<svg class="a" style="left:1094px;top:657px" width="18" height="17" viewBox="0 0 18 17"><path d="M1 3l16-2v14L1 14z" stroke="#ddd" stroke-width="1.2" fill="none"/><path d="M6 9a3 3 0 0 1 5-2M12 9a3 3 0 0 1-5 2" stroke="#ddd" stroke-width="1.1" fill="none"/><circle cx="13.5" cy="13.5" r="3" fill="#2a7ad8"/></svg>
<svg class="a" style="left:1119px;top:659px" width="23" height="13" viewBox="0 0 23 13"><rect x="0.6" y="0.6" width="21.8" height="11.8" stroke="#ddd" stroke-width="1.1" fill="none"/><path d="M3 4h17M3 6.5h17M6 9.5h11" stroke="#ccc" stroke-width="1" stroke-dasharray="1.2 0.8"/></svg>
<div class="a" style="left:1154px;top:660.5px;font-size:12px;color:#eee;white-space:nowrap">ENG</div>
<div class="a" style="left:1196px;top:650.5px;font-size:12px;color:#eee;white-space:nowrap">3:57 PM</div>
<div class="a" style="left:1193px;top:668.5px;font-size:12px;color:#eee;white-space:nowrap">9/9/2025</div>

<div id="rightstrip" class="a"></div><div id="rs2" class="a"></div>
</body></html>
